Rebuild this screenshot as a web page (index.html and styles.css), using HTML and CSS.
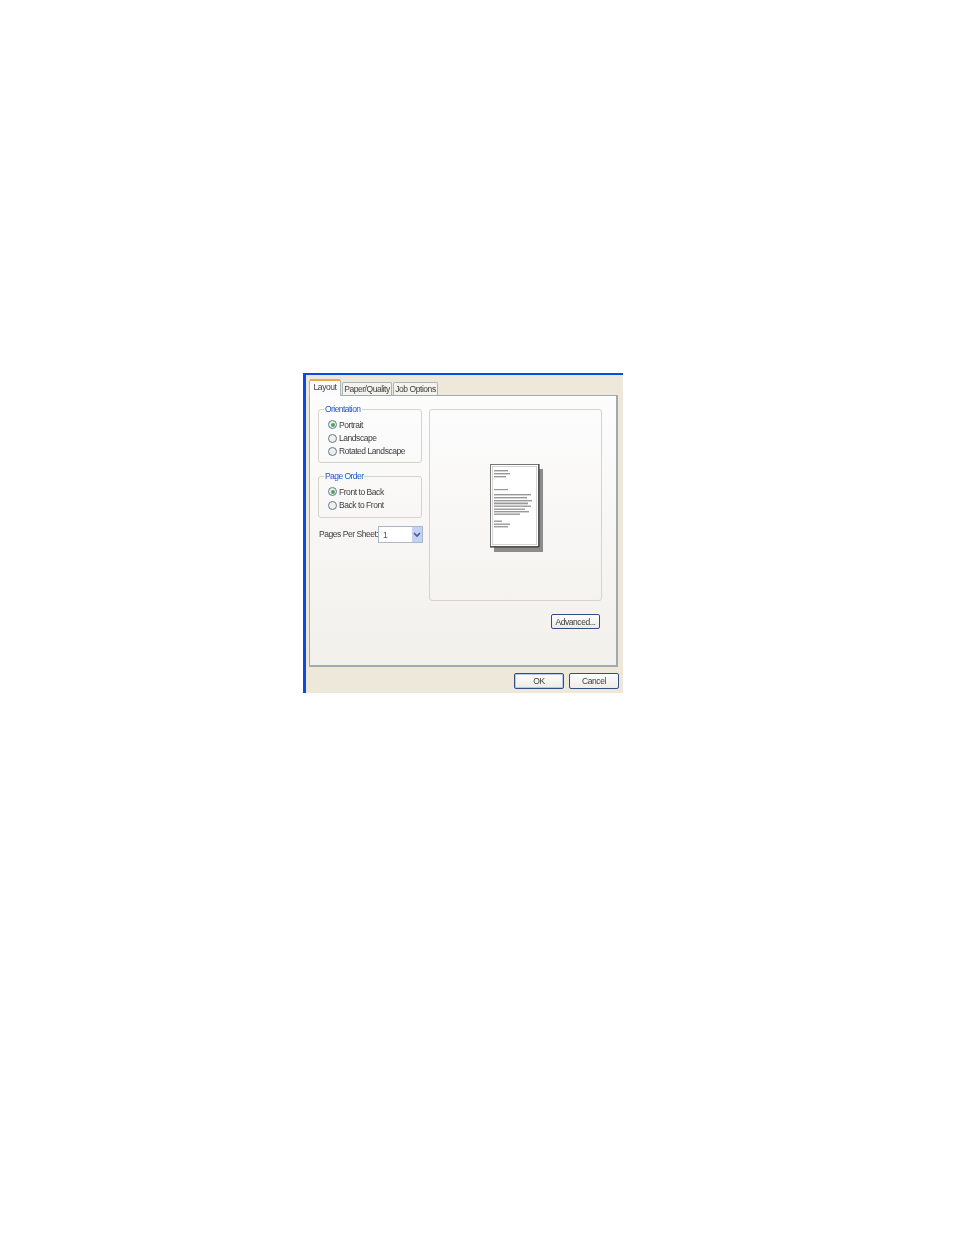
FILE: index.html
```html
<!DOCTYPE html>
<html>
<head>
  <title>Layout</title>
  <link rel="stylesheet" href="styles.css">
</head>
<body>
  <div class="dialog">
    <div class="tabs">
      <div class="tab tab-layout active">Layout</div>
      <div class="tab tab-paper">Paper/Quality</div>
      <div class="tab tab-job">Job Options</div>
    </div>

    <div class="panel">
      <div class="panel-top">
        <div class="left-col">
          <fieldset class="group group-orientation">
            <legend>Orientation</legend>
            <label class="radio-row"><span class="radio checked"></span>Portrait</label>
            <label class="radio-row"><span class="radio"></span>Landscape</label>
            <label class="radio-row"><span class="radio"></span>Rotated Landscape</label>
          </fieldset>

          <fieldset class="group group-order">
            <legend>Page Order</legend>
            <label class="radio-row"><span class="radio checked"></span>Front to Back</label>
            <label class="radio-row"><span class="radio"></span>Back to Front</label>
          </fieldset>

          <div class="pages-row">
            <span class="pages-label">Pages Per Sheet:</span>
            <div class="select">
              <span class="select-value">1</span>
              <span class="select-arrow">
                <svg width="8" height="6" viewBox="0 0 8 6"><path d="M1 1 L4 4 L7 1" fill="none" stroke="#4a5d8a" stroke-width="1.6"/></svg>
              </span>
            </div>
          </div>
        </div>

        <div class="right-col">
          <div class="preview">
            <svg class="page-icon" width="54" height="88" viewBox="0 0 54 88">
              <rect x="4" y="5" width="49" height="83" fill="#8c8c8c"/>
              <rect x="0.5" y="0.5" width="48" height="82" fill="#fff" stroke="#777"/>
              <path d="M0 83 H49 V0" fill="none" stroke="#333" stroke-width="1"/>
              <rect x="2.5" y="2.5" width="44" height="78" fill="none" stroke="#d4d4d4"/>
              <g fill="#999">
                <rect x="4" y="6" width="14" height="1.4"/>
                <rect x="4" y="9" width="16" height="1.4"/>
                <rect x="4" y="12" width="12" height="1.4"/>
                <rect x="4" y="25" width="14" height="1.2"/>
                <rect x="4" y="30" width="37" height="1.4"/>
                <rect x="4" y="33" width="33" height="1.4"/>
                <rect x="4" y="36" width="38" height="1.4"/>
                <rect x="4" y="38.5" width="34" height="1.8"/>
                <rect x="4" y="41.5" width="37" height="1.4"/>
                <rect x="4" y="44.5" width="31" height="1.4"/>
                <rect x="4" y="47" width="35" height="1.4"/>
                <rect x="4" y="49.5" width="26" height="1.4"/>
                <rect x="4" y="56.5" width="8" height="1.4"/>
                <rect x="4" y="59.5" width="16" height="1.4"/>
                <rect x="4" y="62" width="14" height="1.4"/>
              </g>
            </svg>
          </div>
          <div class="advanced-row">
            <button class="btn btn-advanced">Advanced...</button>
          </div>
        </div>
      </div>
    </div>

    <div class="footer">
      <button class="btn btn-default">OK</button>
      <button class="btn">Cancel</button>
    </div>
  </div>
</body>
</html>
```

FILE: styles.css
```css
/* whole page */
body {
  margin: 0;
  background-color: #fff;
  font-family: "Liberation Sans", Arial, sans-serif;
  font-size: 8.5px;
  letter-spacing: -0.45px;
  color: #3c3c3c;
}

/* dialog */
.dialog {
  width: 317px;
  height: 318px;
  margin: 373px 0 0 303px;
  border-top: 2px solid #0a4be6;
  border-left: 3px solid #0a4be6;
  background-color: #ede8da;
  display: flex;
  flex-direction: column;
  filter: blur(0.3px);
}

/* tabs */
.tabs {
  display: flex;
  height: 20px;
  padding: 4px 0 0 3px;
  box-sizing: border-box;
  gap: 1px;
}

.tab {
  height: 13px;
  margin-top: 3px;
  line-height: 13px;
  text-align: center;
  background-color: #f4f3ee;
  border: 1px solid #a9b4b8;
  border-bottom: 0;
  border-radius: 2px 2px 0 0;
}

.tab-layout {
  width: 30px;
}

.tab-paper {
  width: 48px;
}

.tab-job {
  width: 43px;
}

.tab.active {
  height: 15px;
  margin-top: 0;
  background-color: #fcfcfe;
  border-top: 2px solid #eda64a;
  line-height: 12px;
  position: relative;
  z-index: 1;
}

/* main panel */
.panel {
  width: 309px;
  height: 272px;
  margin-left: 3px;
  box-sizing: border-box;
  border: 1px solid #9eabaf;
  border-right-width: 2px;
  border-bottom-width: 2px;
  background: linear-gradient(#fdfdfe, #f2f0eb);
  padding: 13px 15px 0 8px;
}

.panel-top {
  display: flex;
  gap: 6px;
}

.left-col {
  width: 106px;
  margin-top: -4px;
}

.group {
  margin: 0;
  padding: 0 0 0 9px;
  width: 104px;
  box-sizing: border-box;
  border: 1px solid #d6d3c8;
  border-radius: 3px;
}

.group legend {
  margin-left: -4px;
  padding: 0 1px;
  color: #1f55cc;
  line-height: 9px;
  letter-spacing: -0.55px;
}

.group-orientation {
  height: 58px;
}

.group-order {
  height: 46px;
  margin-top: 9px;
}

.radio-row {
  display: flex;
  align-items: center;
  height: 13.4px;
  gap: 2px;
}

.group-orientation .radio-row:first-of-type,
.group-order .radio-row:first-of-type {
  margin-top: 4px;
}

.radio {
  width: 7px;
  height: 7px;
  border: 1px solid #5d7c94;
  border-radius: 50%;
  background-color: #f0efe9;
  display: flex;
  align-items: center;
  justify-content: center;
}

.radio.checked::after {
  content: "";
  width: 4px;
  height: 4px;
  border-radius: 50%;
  background-color: #4aa55a;
}

.pages-row {
  display: flex;
  align-items: center;
  margin-top: 8px;
  padding-left: 1px;
}

.pages-label {
  width: 59px;
  padding-bottom: 2px;
  white-space: nowrap;
}

.select {
  width: 45px;
  height: 17px;
  box-sizing: border-box;
  border: 1px solid #a9b8c8;
  background-color: #fff;
  display: flex;
  align-items: center;
  justify-content: space-between;
}

.select-value {
  padding-left: 4px;
  color: #555;
}

.select-arrow {
  width: 10px;
  height: 15px;
  background-color: #c4d3f4;
  display: flex;
  align-items: center;
  justify-content: center;
}

/* preview */
.preview {
  width: 173px;
  height: 192px;
  box-sizing: border-box;
  border: 1px solid #d6d3c8;
  border-radius: 3px;
  padding: 54px 0 0 60px;
}

.page-icon {
  display: block;
}

.advanced-row {
  display: flex;
  justify-content: flex-end;
  margin-top: 13px;
  padding-right: 2px;
}

/* buttons */
.btn {
  font-family: inherit;
  font-size: 8.5px;
  letter-spacing: -0.45px;
  color: #3c3c3c;
  height: 15px;
  padding: 0;
  border: 1px solid #2f4f7f;
  border-radius: 2px;
  background: linear-gradient(#fff, #ecebe4);
}

.btn-advanced {
  width: 49px;
}

.btn-default {
  box-shadow: inset 0 0 0 1px #b4c8ec;
}

.footer {
  display: flex;
  justify-content: flex-end;
  gap: 5px;
  padding: 6px 4px 0 0;
}

.footer .btn {
  width: 50px;
  height: 16px;
}
```
